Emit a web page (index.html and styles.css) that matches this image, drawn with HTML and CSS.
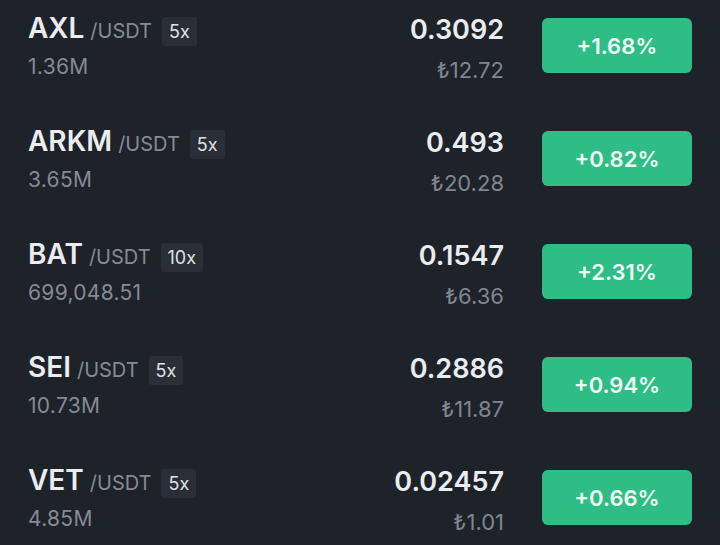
FILE: index.html
```html
<!DOCTYPE html>
<html>
<head>
<meta charset="utf-8">
<link rel="stylesheet" href="styles.css">
</head>
<body>
<div class="list">
  <div class="row">
    <div class="left">
      <div class="pair"><span class="base">AXL</span><span class="quote">/USDT</span><span class="lev">5x</span></div>
      <div class="vol">1.36M</div>
    </div>
    <div class="price">
      <div class="last">0.3092</div>
      <div class="fiat">₺12.72</div>
    </div>
    <div class="chg">+1.68%</div>
  </div>
  <div class="row">
    <div class="left">
      <div class="pair"><span class="base">ARKM</span><span class="quote">/USDT</span><span class="lev">5x</span></div>
      <div class="vol">3.65M</div>
    </div>
    <div class="price">
      <div class="last">0.493</div>
      <div class="fiat">₺20.28</div>
    </div>
    <div class="chg">+0.82%</div>
  </div>
  <div class="row">
    <div class="left">
      <div class="pair"><span class="base">BAT</span><span class="quote">/USDT</span><span class="lev">10x</span></div>
      <div class="vol">699,048.51</div>
    </div>
    <div class="price">
      <div class="last">0.1547</div>
      <div class="fiat">₺6.36</div>
    </div>
    <div class="chg">+2.31%</div>
  </div>
  <div class="row">
    <div class="left">
      <div class="pair"><span class="base">SEI</span><span class="quote">/USDT</span><span class="lev">5x</span></div>
      <div class="vol">10.73M</div>
    </div>
    <div class="price">
      <div class="last">0.2886</div>
      <div class="fiat">₺11.87</div>
    </div>
    <div class="chg">+0.94%</div>
  </div>
  <div class="row">
    <div class="left">
      <div class="pair"><span class="base">VET</span><span class="quote">/USDT</span><span class="lev">5x</span></div>
      <div class="vol">4.85M</div>
    </div>
    <div class="price">
      <div class="last">0.02457</div>
      <div class="fiat">₺1.01</div>
    </div>
    <div class="chg">+0.66%</div>
  </div>
</div>
</body>
</html>
```
FILE: styles.css
```css
html, body {
  margin: 0;
  padding: 0;
  background: #1e2229;
  font-family: "Inter", "Lato", sans-serif;
}
.list {
  display: flex;
  flex-direction: column;
}
.row {
  height: 113px;
  box-sizing: border-box;
  display: flex;
  align-items: flex-start;
  padding: 0 28px 0 28px;
}
.left {
  flex: 1;
  padding-top: 11px;
}
.pair {
  display: flex;
  align-items: baseline;
  height: 34px;
}
.base {
  color: #eaecef;
  font-size: 28px;
  font-weight: 600;
  line-height: 34px;
}
.quote {
  color: #858b94;
  font-size: 20px;
  margin-left: 6px;
}
.lev {
  margin-left: 10px;
  background: #2a2f37;
  color: #dfe2e6;
  font-size: 18px;
  height: 29px;
  line-height: 29px;
  padding: 0 7px;
  border-radius: 3px;
}
.vol {
  color: #858b94;
  font-size: 21px;
  letter-spacing: 0.3px;
  margin-top: 9px;
}
.price {
  text-align: right;
  padding-top: 13px;
}
.last {
  color: #eaecef;
  font-size: 27px;
  font-weight: 600;
  line-height: 34px;
}
.fiat {
  color: #80868f;
  font-size: 22px;
  margin-top: 10px;
}
.chg {
  margin-left: 38px;
  margin-top: 18px;
  width: 150px;
  height: 55px;
  border-radius: 6px;
  background: #2fbd86;
  color: #effaf5;
  font-size: 22px;
  font-weight: 600;
  display: flex;
  align-items: center;
  justify-content: center;
}
```
